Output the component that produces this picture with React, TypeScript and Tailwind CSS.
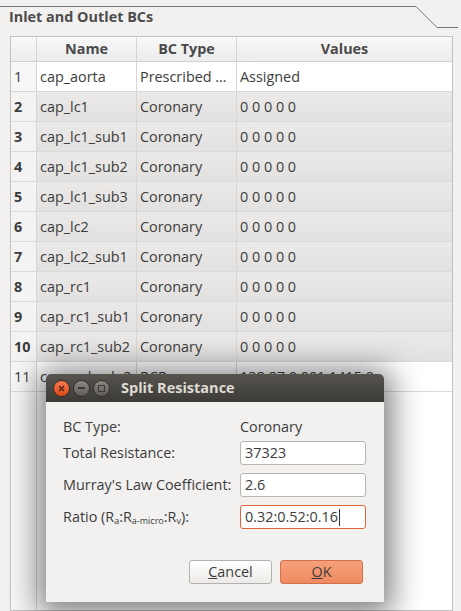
import React from "react";

const rows: { n: number; name: string; type: string; values: string; sel: boolean }[] = [
  { n: 1, name: "cap_aorta", type: "Prescribed …", values: "Assigned", sel: false },
  { n: 2, name: "cap_lc1", type: "Coronary", values: "0 0 0 0 0", sel: true },
  { n: 3, name: "cap_lc1_sub1", type: "Coronary", values: "0 0 0 0 0", sel: true },
  { n: 4, name: "cap_lc1_sub2", type: "Coronary", values: "0 0 0 0 0", sel: true },
  { n: 5, name: "cap_lc1_sub3", type: "Coronary", values: "0 0 0 0 0", sel: true },
  { n: 6, name: "cap_lc2", type: "Coronary", values: "0 0 0 0 0", sel: true },
  { n: 7, name: "cap_lc2_sub1", type: "Coronary", values: "0 0 0 0 0", sel: true },
  { n: 8, name: "cap_rc1", type: "Coronary", values: "0 0 0 0 0", sel: true },
  { n: 9, name: "cap_rc1_sub1", type: "Coronary", values: "0 0 0 0 0", sel: true },
  { n: 10, name: "cap_rc1_sub2", type: "Coronary", values: "0 0 0 0 0", sel: true },
  { n: 11, name: "cap_pulm_lo2", type: "RCR", values: "138.87 0.001 1415.9", sel: false },
];

export default function App() {
  return (
    <div
      className="relative w-[461px] h-[611px] overflow-hidden bg-[#f2f1f0] text-[#3c3c3c] text-[14.4px]"
      style={{ fontFamily: '"Open Sans", "DejaVu Sans", sans-serif' }}
    >
      {/* group frame line */}
      <svg className="absolute left-0 top-0" width="461" height="30">
        <polyline points="0,6.5 416,6.5 437,27.5 458,27.5" fill="none" stroke="#777" strokeWidth="1" />
      </svg>

      <div className="flex flex-col h-full">
        <div className="pl-[9px] pt-[7px] h-[36px] font-bold text-[14.4px] text-[#4c4c4c] leading-[20px]">
          Inlet and Outlet BCs
        </div>
        <div className="ml-[10px] w-[443px] flex-1 border border-[#c2c2c2] bg-white flex flex-col">
          {/* header */}
          <div className="flex h-[25px] bg-gradient-to-b from-[#f8f8f8] to-[#ececec] border-b border-[#d0d0d0] font-bold text-[#4a4a4a]">
            <div className="w-[26px] border-r border-[#d6d6d6]" />
            <div className="w-[100px] border-r border-[#d6d6d6] flex items-center justify-center">Name</div>
            <div className="w-[100px] border-r border-[#d6d6d6] flex items-center justify-center">BC Type</div>
            <div className="flex-1 flex items-center justify-center">Values</div>
          </div>
          {rows.map((r) => (
            <div key={r.n} className="flex h-[30px] border-b border-[#d9d9d9]">
              <div
                className={
                  "w-[26px] border-r border-[#d6d6d6] flex items-center pl-[3px] " +
                  (r.sel ? "bg-[#f3f3f3] font-bold" : "bg-[#f7f7f7]")
                }
              >
                {r.n}
              </div>
              <div
                className={
                  "w-[100px] border-r border-[#d6d6d6] flex items-center pl-[3px] whitespace-nowrap overflow-hidden " +
                  (r.sel ? "bg-gradient-to-b from-[#ebeae9] to-[#e2e1e0]" : "")
                }
              >
                {r.name}
              </div>
              <div
                className={
                  "w-[100px] border-r border-[#d6d6d6] flex items-center pl-[3px] whitespace-nowrap overflow-hidden " +
                  (r.sel ? "bg-gradient-to-b from-[#ebeae9] to-[#e2e1e0]" : "")
                }
              >
                {r.type}
              </div>
              <div
                className={
                  "flex-1 flex items-center pl-[3px] whitespace-nowrap overflow-hidden " +
                  (r.sel ? "bg-gradient-to-b from-[#ebeae9] to-[#e2e1e0]" : "")
                }
              >
                {r.values}
              </div>
            </div>
          ))}
          <div className="flex-1 flex">
            <div className="w-[26px] border-r border-[#d6d6d6] bg-[#f7f7f7]" />
          </div>
        </div>
      </div>

      {/* dialog */}
      <div className="absolute left-[46px] top-[374px] w-[338px] h-[228px] flex flex-col bg-[#f2f1f0] rounded-t-[5px] shadow-[0_4px_30px_8px_rgba(0,0,0,0.5)]">
        <div className="h-[28px] flex items-center rounded-t-[5px] bg-gradient-to-b from-[#57544e] to-[#3c3b37] pl-[7px]">
          <div className="flex items-center gap-[3px]">
            <div className="w-[17px] h-[17px] rounded-full bg-gradient-to-b from-[#f77a4e] to-[#dd4814] border border-[#3a2a22] flex items-center justify-center">
              <svg width="7" height="7" viewBox="0 0 7 7">
                <path d="M1 1L6 6M6 1L1 6" stroke="#4a2216" strokeWidth="1.3" />
              </svg>
            </div>
            <div className="w-[17px] h-[17px] rounded-full bg-gradient-to-b from-[#8b8882] to-[#5f5c57] border border-[#2f2e2b] flex items-center justify-center">
              <div className="w-[7px] h-[1.5px] bg-[#3a3935]" />
            </div>
            <div className="w-[17px] h-[17px] rounded-full bg-gradient-to-b from-[#8b8882] to-[#5f5c57] border border-[#2f2e2b] flex items-center justify-center">
              <div className="w-[7px] h-[7px] border-[1.3px] border-[#3a3935]" />
            </div>
          </div>
          <div className="ml-[11px] font-bold text-[#dfdbd2] text-[14.5px]">Split Resistance</div>
        </div>
        <div className="flex-1 flex flex-col px-[17px] pt-[14px]">
          <div className="flex items-center h-[22px]">
            <div className="w-[177px]">BC Type:</div>
            <div>Coronary</div>
          </div>
          <div className="flex items-center mt-[3px]">
            <div className="w-[177px] whitespace-nowrap">Total Resistance:</div>
            <div className="w-[126px] h-[24px] bg-white border border-[#b8b5b0] rounded-[3px] flex items-center pl-[4px]">37323</div>
          </div>
          <div className="flex items-center mt-[8px]">
            <div className="w-[177px] whitespace-nowrap">Murray's Law Coefficient:</div>
            <div className="w-[126px] h-[24px] bg-white border border-[#b8b5b0] rounded-[3px] flex items-center pl-[4px]">2.6</div>
          </div>
          <div className="flex items-center mt-[8px]">
            <div className="w-[177px] whitespace-nowrap">
              Ratio (R<sub className="text-[9px]">a</sub>:R<sub className="text-[9px]">a-micro</sub>:R<sub className="text-[9px]">v</sub>):
            </div>
            <div className="w-[126px] h-[24px] bg-white border border-[#e0633a] rounded-[3px] flex items-center pl-[4px]">
              0.32:0.52:0.16<span className="inline-block w-px h-[17px] bg-[#333] ml-[1px]" />
            </div>
          </div>
          <div className="flex justify-end gap-[8px] mt-[31px] pr-[4px]">
            <div className="w-[83px] h-[24px] rounded-[3px] border border-[#b5b2ad] bg-gradient-to-b from-[#ffffff] to-[#ecebe9] flex items-center justify-center">
              <span><span className="underline">C</span>ancel</span>
            </div>
            <div className="w-[83px] h-[24px] rounded-[3px] border border-[#d0714d] bg-gradient-to-b from-[#f6a07c] to-[#f08a5f] flex items-center justify-center">
              <span><span className="underline">O</span>K</span>
            </div>
          </div>
        </div>
      </div>
    </div>
  );
}
